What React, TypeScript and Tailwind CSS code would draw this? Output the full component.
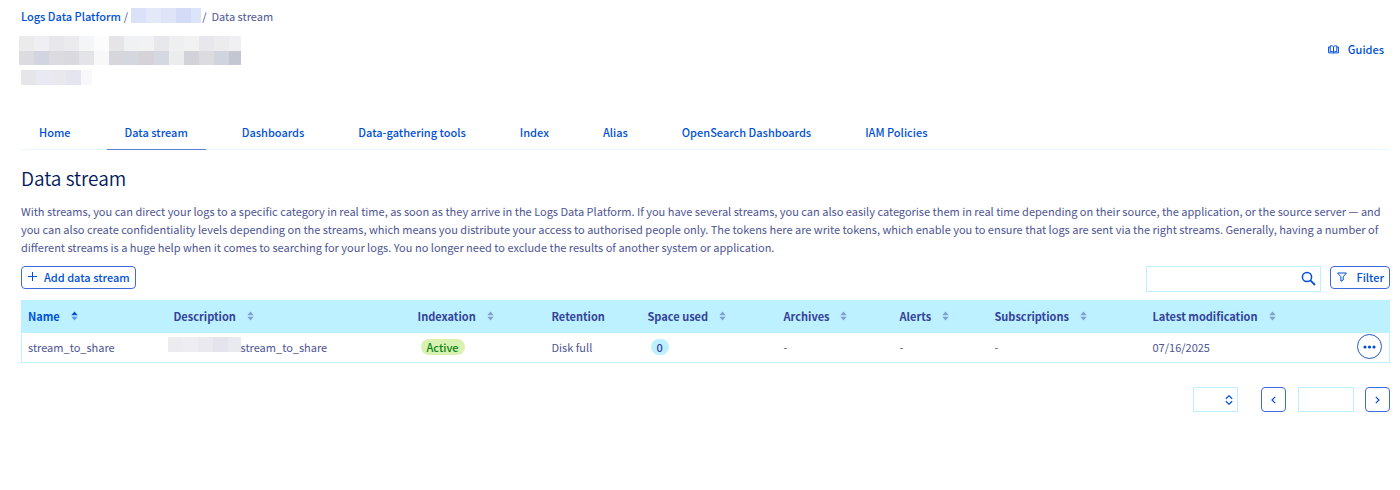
import React from "react";

const Mosaic = ({ colors, tall = "h-[15px]" }: { colors: string[]; tall?: string }) => (
  <span className="flex" aria-hidden="true">
    {colors.map((color, i) => (
      <span key={i} className={`w-[15px] shrink-0 last:w-auto last:flex-1 ${tall}`} style={{ backgroundColor: color }} />
    ))}
  </span>
);

const SortIcon = ({ active = false }: { active?: boolean }) => (
  <svg width="7" height="10" viewBox="0 0 7 10" className="shrink-0">
    <path d="M3.5 0.4 6.7 4.2H0.3z" fill={active ? "#0050d7" : "#7f9fcd"} />
    <path d="M3.5 9.6 6.7 5.8H0.3z" fill={active ? "#5a98e8" : "#7f9fcd"} />
  </svg>
);

const tabs = [
  "Home",
  "Data stream",
  "Dashboards",
  "Data-gathering tools",
  "Index",
  "Alias",
  "OpenSearch Dashboards",
  "IAM Policies",
];

const columns = [
  { label: "Name", width: "w-[146px]", sortable: true, active: true },
  { label: "Description", width: "w-[244px]", sortable: true },
  { label: "Indexation", width: "w-[134px]", sortable: true },
  { label: "Retention", width: "w-[96px]" },
  { label: "Space used", width: "w-[136px]", sortable: true },
  { label: "Archives", width: "w-[116px]", sortable: true },
  { label: "Alerts", width: "w-[95px]", sortable: true },
  { label: "Subscriptions", width: "w-[158px]", sortable: true },
  { label: "Latest modification", width: "", sortable: true },
];

const Header = () => (
  <header className="flex items-start justify-between">
    <div>
      <nav aria-label="Breadcrumb" className="flex h-[18px] items-center whitespace-nowrap">
        <a href="#" className="font-medium text-[#0050d7]">Logs Data Platform</a>
        <span className="px-[3px]">/</span>
        <a href="#" aria-label="Service" className="mb-[2px] w-[70px]">
          <Mosaic colors={["#dbe1f6", "#e4e9f9", "#dfe4f8", "#d3dbf6", "#dbe4f8"]} />
        </a>
        <span className="pl-px pr-[5px]">/</span>
        <span>Data stream</span>
      </nav>
      <div className="-ml-[2px] mt-[11px] w-[222px]">
        <Mosaic
          colors={["#ebebec", "#efeff3", "#e8e8ec", "#ebebee", "#f4f5f7", "#fcfcfc", "#e5e5e8", "#f0f1f2", "#f2f2f2", "#e8e7eb", "#eeeff1", "#f2f2f3", "#e8e8ec", "#ececef", "#f0f0f2"]}
        />
        <Mosaic
          tall="h-[14px]"
          colors={["#dbdbe0", "#d2d5df", "#dbdbe0", "#dad9df", "#e4e4e8", "#f8f8f9", "#d7d6dc", "#d5d7de", "#d5d2d9", "#d5d8e1", "#ebecee", "#d2d2d8", "#dcdce0", "#d0d4de", "#c4c7d1"]}
        />
      </div>
      <div className="mt-[5px] w-[71px]">
        <Mosaic colors={["#e5e5ea", "#e9e9f3", "#e9e8ee", "#e5e5ef", "#f8f8fb"]} />
      </div>
    </div>
    <a href="#" className="mr-[6px] mt-[33px] flex items-center gap-[9px] font-medium text-[#0050d7]">
      <svg width="11" height="9" viewBox="0 0 11 9" fill="none" stroke="currentColor">
        <path d="M5.500 1.800C4.700.8 3.200.6 2.200 1v5.600c1.200-.2 2.500 0 3.300.8.8-.8 2.100-1 3.300-.8V1C7.800.6 6.300.8 5.500 1.800zM5.500 1.800v5.600M2 2H.6v5.900h3.900c.4.500 1.600.500 2 0h3.900V2H9" />
      </svg>
      Guides
    </a>
  </header>
);

const Toolbar = () => (
  <div className="mt-[10px] flex items-start justify-between">
    <button className="flex h-[23px] items-center gap-[7px] rounded-[4px] border border-[#3f6ade] pb-[2px] pl-[6px] pr-[5px] font-medium text-[#0050d7]">
      <svg width="9" height="9" viewBox="0 0 9 9" stroke="currentColor">
        <path d="M4.500 0v9M0 4.500h9" />
      </svg>
      Add data stream
    </button>
    <div className="flex items-start gap-[9px]">
      <form className="flex h-[26px] w-[175px] items-center border border-[#bef1ff] pb-[2px] pr-1">
        <input type="text" aria-label="Search" className="min-w-0 flex-1 px-2 outline-none" />
        <button type="button" aria-label="Search" className="text-[#0050d7]">
          <svg width="15" height="15" viewBox="0 0 15 15" fill="none" stroke="currentColor" strokeWidth="1.500">
            <circle cx="6" cy="6" r="4.600" />
            <path d="M9.400 9.400 14 14" strokeWidth="1.800" />
          </svg>
        </button>
      </form>
      <button className="flex h-[23px] items-center gap-[9px] rounded-[4px] border border-[#3f6ade] pb-[2px] pl-[6px] pr-[5px] font-medium text-[#0050d7]">
        <svg width="10" height="10" viewBox="0 0 10 10" fill="none" stroke="currentColor" strokeLinejoin="round">
          <path d="M.6 1h8.800L6.200 4.800V8L3.900 9.200V4.800z" />
        </svg>
        Filter
      </button>
    </div>
  </div>
);

const StreamTable = () => (
  <table className="mt-2 w-full table-fixed border border-[#bef1ff] text-left">
    <thead className="bg-[#bef1ff] text-[#33439a]">
      <tr className="h-8">
        {columns.map((col) => (
          <th key={col.label} className={`whitespace-nowrap p-0 pb-px pl-[6px] font-bold ${col.width}`}>
            <span className={`flex items-center gap-[11px] ${col.active ? "text-[#0050d7]" : ""}`}>
              {col.label}
              {col.sortable && <SortIcon active={col.active} />}
            </span>
          </th>
        ))}
        <th className="w-[38px] p-0" aria-label="Actions" />
      </tr>
    </thead>
    <tbody>
      <tr className="h-[30px]">
        <td className="p-0 pb-px pl-[6px]">stream_to_share</td>
        <td className="p-0 pb-px">
          <span className="flex items-center">
            <span className="mb-1 w-[73px]">
              <Mosaic colors={["#ecebf0", "#eeedf2", "#eae9ef", "#e5e4ec", "#e9e9f0"]} />
            </span>
            stream_to_share
          </span>
        </td>
        <td className="p-0 pb-px pl-[9px]">
          <span className="block h-4 w-fit rounded-full bg-[#d8f1b1] px-[6px] font-medium leading-4 text-[#0b8214]">Active</span>
        </td>
        <td className="p-0 pb-px pl-[6px]">Disk full</td>
        <td className="p-0 pb-px pl-[9px]">
          <span className="block h-4 w-fit rounded-full bg-[#bef1ff] px-[6px] font-medium leading-4 text-[#33439a]">0</span>
        </td>
        <td className="p-0 pb-px pl-[6px]">-</td>
        <td className="p-0 pb-px pl-[6px]">-</td>
        <td className="p-0 pb-px pl-[6px]">-</td>
        <td className="p-0 pb-px pl-[6px]">07/16/2025</td>
        <td className="p-0 pb-px pl-[5px]">
          <button
            aria-label="Actions"
            className="flex size-[25px] items-center justify-center rounded-full border border-[#2859c0] text-[#0050d7]"
          >
            <svg width="13" height="4" viewBox="0 0 13 4" fill="currentColor">
              <circle cx="2" cy="2" r="1.600" />
              <circle cx="6.500" cy="2" r="1.600" />
              <circle cx="11" cy="2" r="1.600" />
            </svg>
          </button>
        </td>
      </tr>
    </tbody>
  </table>
);

const Pagination = () => (
  <div className="mt-6 flex items-start justify-end text-[#0050d7]">
    <div className="grid items-center">
      <select
        aria-label="Rows per page"
        className="col-start-1 row-start-1 h-[25px] w-[45px] appearance-none border border-[#bef1ff] bg-white"
      />
      <svg
        width="8"
        height="10"
        viewBox="0 0 8 10"
        fill="none"
        stroke="currentColor"
        strokeWidth="1.200"
        className="pointer-events-none col-start-1 row-start-1 mr-[5px] justify-self-end"
      >
        <path d="M.8 3.800 4 .8l3.200 3M.8 6.200 4 9.200l3.200-3" />
      </svg>
    </div>
    <button aria-label="Previous page" className="ml-[23px] flex size-[25px] items-center justify-center rounded-[4px] border border-[#3f6ade]">
      <svg width="5" height="8" viewBox="0 0 5 8" fill="none" stroke="currentColor" strokeWidth="1.200">
        <path d="M4.200.8 1 4l3.200 3.200" />
      </svg>
    </button>
    <input type="text" aria-label="Page" className="ml-3 h-[25px] w-14 border border-[#bef1ff] px-2" />
    <button aria-label="Next page" className="ml-[11px] flex size-[25px] items-center justify-center rounded-[4px] border border-[#3f6ade]">
      <svg width="5" height="8" viewBox="0 0 5 8" fill="none" stroke="currentColor" strokeWidth="1.200">
        <path d="M.8.8 4 4 .8 7.200" />
      </svg>
    </button>
  </div>
);

const App = () => {
  return (
    <div className="min-h-screen bg-white pl-[21px] pr-[10px] pt-[7px] font-['Noto_Sans_CJK_SC','Noto_Sans',sans-serif] text-[11px] leading-[18px] text-[#4d5592]">
      <Header />
      <nav className="mt-[34px] flex gap-[18px] border-b border-[#e3f8ff]">
        {tabs.map((tab) => (
          <a
            key={tab}
            href="#"
            className={`-mb-px whitespace-nowrap border-b px-[18px] pb-2 pt-1 font-medium text-[#0050d7] ${
              tab === "Data stream" ? "border-b-[#5a80dc]" : "border-b-[#e3f8ff]"
            }`}
          >
            {tab}
          </a>
        ))}
      </nav>
      <main>
        <h1 className="mt-[15px] text-[19px] font-[350] leading-[26px] text-[#00185e]">Data stream</h1>
        <p className="mt-[11px]">
          With streams, you can direct your logs to a specific category in real time, as soon as they arrive in the Logs
          Data Platform. If you have several streams, you can also easily categorise them in real time depending on their
          source, the application, or the source server — and you can also create confidentiality levels depending on the
          streams, which means you distribute your access to authorised people only. The tokens here are write tokens,
          which enable you to ensure that logs are sent via the right streams. Generally, having a number of different
          streams is a huge help when it comes to searching for your logs. You no longer need to exclude the results of
          another system or application.
        </p>
        <Toolbar />
        <StreamTable />
        <Pagination />
      </main>
    </div>
  );
};

export default App;
